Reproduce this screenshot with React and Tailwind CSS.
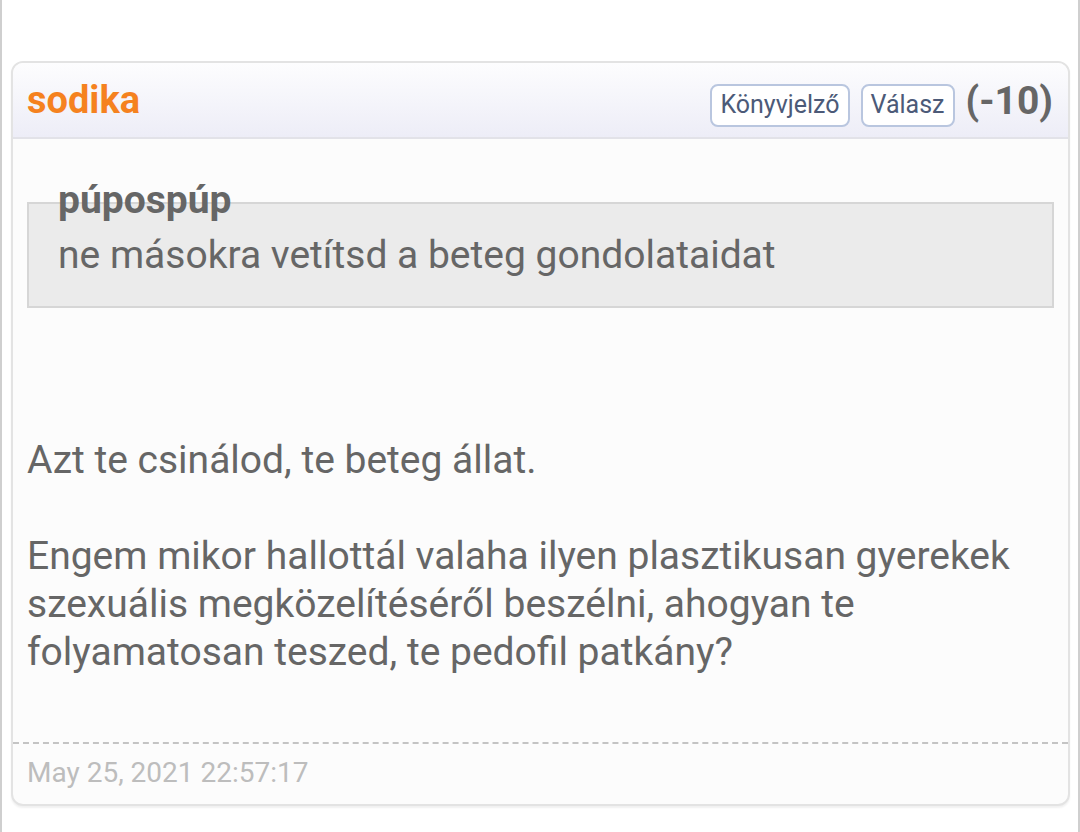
import React from "react";

const Comment = ({ author, score, quote, body, date }) => {
  return (
    <div className="rounded-xl border-2 border-[#e3e3e3] bg-[#fcfcfc] shadow-[0_2px_2px_rgba(0,0,0,0.06)] overflow-hidden">
      <div className="flex items-center justify-between h-[76px] pl-[14px] pr-[15px] border-b-2 border-[#e2e2e8] bg-gradient-to-b from-[#fdfdfe] to-[#ededf7]">
        <span className="text-[38px] font-bold text-[#f5821f] leading-none">{author}</span>
        <div className="flex items-center gap-[11px] pt-[10px]">
          <button className="h-[43px] px-[8px] rounded-lg border-2 border-[#b9c6df] bg-white text-[25px] text-[#4c5a78]">
            Könyvjelző
          </button>
          <button className="h-[43px] px-[8px] rounded-lg border-2 border-[#b9c6df] bg-white text-[25px] text-[#4c5a78]">
            Válasz
          </button>
          <span className="-mt-[8px] text-[39px] font-bold text-[#666] leading-none">({score})</span>
        </div>
      </div>

      <div className="px-[14px]">
        <div className="mt-[63px] border-2 border-[#d6d6d6] bg-[#ebebeb] pl-[29px] pr-4 pb-[27px]">
          <div className="-mt-[24px] h-[40px] text-[39px] leading-[40px] font-bold text-[#666]">
            {quote.author}
          </div>
          <div className="mt-[11px] text-[39px] leading-[48px] text-[#666]">{quote.text}</div>
        </div>

        <div className="mt-[128px] mb-[66px] text-[39px] leading-[48px] text-[#666]">
          {body.map((p, i) => (
            <p key={i} className={i > 0 ? "mt-[48px]" : ""}>
              {p}
            </p>
          ))}
        </div>
      </div>

      <div className="border-t-2 border-dashed border-[#c4c4c4] px-[14px] pt-[11px] pb-[13px]">
        <div className="text-[28px] leading-[36px] text-[#bdbdbd]">{date}</div>
      </div>
    </div>
  );
};

export default function App() {
  return (
    <div
      className="h-[832px] w-[1080px] bg-white border-l-2 border-r-2 border-[#cfcfcf] pl-[9px] pr-[8px] pt-[61px]"
      style={{ fontFamily: "Roboto, 'Noto Sans', sans-serif" }}
    >
      <Comment
        author="sodika"
        score="-10"
        quote={{
          author: "púpospúp",
          text: "ne másokra vetítsd a beteg gondolataidat",
        }}
        body={[
          "Azt te csinálod, te beteg állat.",
          "Engem mikor hallottál valaha ilyen plasztikusan gyerekek szexuális megközelítéséről beszélni, ahogyan te folyamatosan teszed, te pedofil patkány?",
        ]}
        date="May 25, 2021 22:57:17"
      />
    </div>
  );
}
